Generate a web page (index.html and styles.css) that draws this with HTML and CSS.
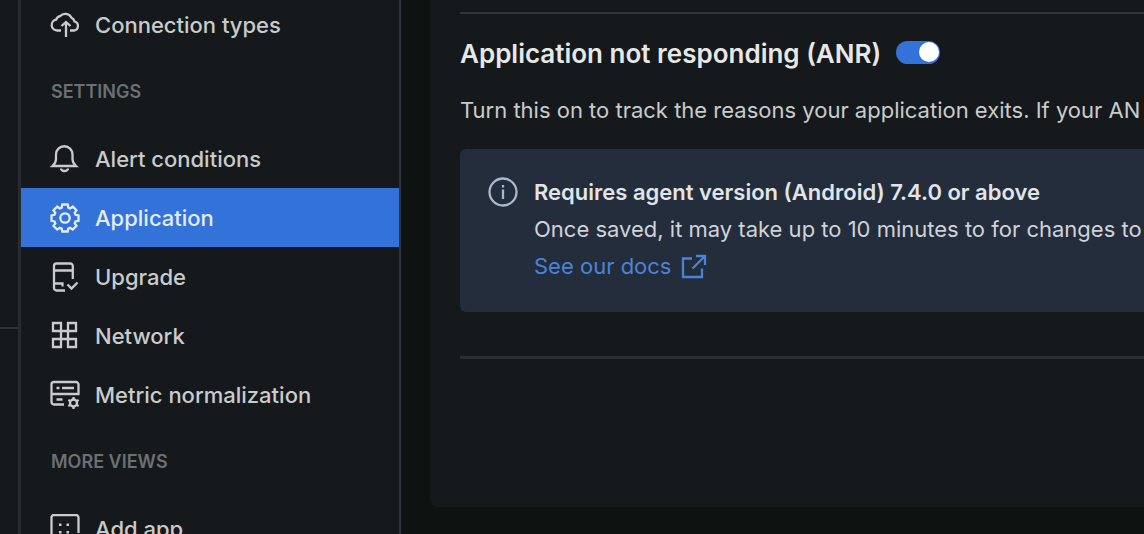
FILE: index.html
```html
<!DOCTYPE html>
<html lang="en">
<head>
<meta charset="utf-8">
<title>Application settings</title>
<link rel="stylesheet" href="styles.css">
</head>
<body>
<div class="app">
  <div class="rail"><div class="rail-section"></div></div>
  <nav class="sidebar" aria-label="Settings">
    <a class="item" href="#connection">
      <svg class="icon" viewBox="0 0 30 30"><path d="M11 20.500H7a5.500 5.500 0 0 1-.8-10.900A5 5 0 0 1 10 6.200a7 7 0 0 1 11.500 1.500A5.500 5.500 0 0 1 24.500 11.500a4.600 4.600 0 0 1-.5 9h-4M16 27V13M11.500 16l4.500-4 4.500 4"/></svg>
      <span>Connection types</span>
    </a>
    <h2 class="group">SETTINGS</h2>
    <a class="item" href="#alerts">
      <svg class="icon" viewBox="0 0 30 30"><path d="M2.500 22c2.300-2 3.500-3.800 3.500-7v-4.500a8.200 8.200 0 0 1 16.500 0V15c0 3.200 1.200 5 3.500 7zM11 24.500a3.500 2.500 0 0 0 7 0"/></svg>
      <span>Alert conditions</span>
    </a>
    <a class="item active" href="#application" aria-current="page">
      <svg class="icon" viewBox="0 0 30 30"><path d="M12.300 1.500h5.400l.6 3.100 1.900.8 2.600-1.800 3.700 3.700-1.800 2.600.8 1.900 3 .6v5.400l-3 .6-.8 1.900 1.800 2.600-3.700 3.700-2.600-1.800-1.900.8-.6 2.900h-5.400l-.6-2.900-1.900-.8-2.600 1.800-3.700-3.700 1.800-2.600-.8-1.900-3-.6v-5.400l3-.6.8-1.900-1.800-2.600 3.700-3.700 2.600 1.800 1.900-.8z"/><circle cx="15" cy="15" r="4.700"/></svg>
      <span>Application</span>
    </a>
    <a class="item" href="#upgrade">
      <svg class="icon" viewBox="0 0 30 30"><path d="M4 8.500h18.500M22.800 17V4a2.500 2.500 0 0 0-2.500-2.500H6.500A2.500 2.500 0 0 0 4 4v22a2.500 2.500 0 0 0 2.500 2.500H15M4 21.500h8.500v3M17.500 22.500l4 4 6-6"/></svg>
      <span>Upgrade</span>
    </a>
    <a class="item" href="#network">
      <svg class="icon" viewBox="0 0 30 30"><path d="M3 2h8v24H3v-8h23v8h-8V2h8v8H3z"/></svg>
      <span>Network</span>
    </a>
    <a class="item" href="#metrics">
      <svg class="icon" viewBox="0 0 30 30"><path d="M14 24.500H4A2.500 2.500 0 0 1 1.500 22V4.500A2.500 2.500 0 0 1 4 2h22a2.500 2.500 0 0 1 2.500 2.500V14H1.500M6.500 8h3M12 8h12M6.500 19.500h6"/><circle cx="23.500" cy="23" r="3.500"/><path d="M23.500 17v2M23.500 27v2M18.300 20l1.900 1M26.800 25l1.900 1M18.300 26l1.900-1M26.800 21l1.900-1"/></svg>
      <span>Metric normalization</span>
    </a>
    <h2 class="group">MORE VIEWS</h2>
    <a class="item" href="#add">
      <svg class="icon" viewBox="0 0 30 30"><path d="M14 27.500H4A2.500 2.500 0 0 1 1.500 25V3A2.500 2.500 0 0 1 4 1h22A2.500 2.500 0 0 1 28.500 3.500V19M21 25h8M25 21v8"/><path class="dots" d="M9 9.500h2.500V12H9zM16.500 9.500H19V12h-2.500zM9 17h2.500v2.500H9zM16.500 17H19v2.500h-2.500z"/></svg>
      <span>Add app</span>
    </a>
  </nav>
  <main class="main">
    <section class="card">
      <hr class="rule">
      <div class="heading">
        <label class="title" for="anr">Application not responding (ANR)</label>
        <input class="toggle" id="anr" type="checkbox" role="switch" checked>
      </div>
      <p class="lead">Turn this on to track the reasons your application exits. If your AN</p>
      <div class="callout">
        <svg class="icon" viewBox="0 0 30 30"><circle cx="15" cy="15" r="13.500"/><path d="M15 12.500V22M15 8v2.500"/></svg>
        <div class="message">
          <strong class="strong">Requires agent version (Android) 7.4.0 or above</strong>
          <p class="note">Once saved, it may take up to 10 minutes to for changes to</p>
          <a class="docs" href="#docs"><span>See our docs</span>
            <svg class="external" viewBox="0 0 26 26"><path d="M11 4.500H2V23h19V14.500M11.500 14.500L23.500 2.500M15 2h9v9"/></svg>
          </a>
        </div>
      </div>
      <hr class="rule rule-end">
    </section>
  </main>
</div>
</body>
</html>
```

FILE: styles.css
```css
* { box-sizing: border-box; }

body {
  margin: 0;
  background: #0e1312;
  color: #c9cbcc;
  font-family: Inter, "Liberation Sans", sans-serif;
  font-size: 22px;
}

.app {
  display: flex;
  height: 100vh;
  overflow: hidden;
}

.rail {
  flex: 0 0 21px;
  background: #15191b;
  border-right: 3px solid #272c30;
}

.rail-section {
  height: 329px;
  border-bottom: 2px solid #2f3437;
}

.sidebar {
  flex: 0 0 380px;
  align-self: flex-start;
  min-height: 100vh;
  margin-top: -5px;
  background: #15191b;
  border-right: 2px solid #2f3538;
}

.item {
  display: flex;
  align-items: center;
  gap: 15px;
  height: 59px;
  padding-left: 29px;
  color: #c9cbcc;
  font-weight: 500;
  text-decoration: none;
  white-space: nowrap;
}

.item.active {
  background: #3372d9;
  color: #e3ecfb;
}

.group {
  margin: 0;
  padding-left: 30px;
  color: #6b7075;
  font-size: 18px;
  font-weight: 600;
  line-height: 75px;
}

.icon {
  flex: none;
  width: 30px;
  height: 30px;
  fill: none;
  stroke: currentColor;
  stroke-width: 2.3;
}

.icon .dots {
  fill: currentColor;
  stroke: none;
}

.main {
  flex: 1;
  min-width: 0;
  padding-left: 29px;
  overflow: hidden;
}

.card {
  padding: 12px 0 148px 30px;
  background: #15191b;
  border-bottom-left-radius: 8px;
  white-space: nowrap;
}

.rule {
  height: 2px;
  margin: 0;
  border: 0;
  background: #2f3538;
}

.rule-end {
  height: 3px;
  margin-top: 44px;
  background: #2a2f32;
}

.heading {
  display: flex;
  align-items: center;
  gap: 15px;
  margin-top: 23px;
}

.title {
  color: #e6e8e8;
  font-size: 26px;
  font-weight: 600;
  line-height: 34px;
}

.toggle {
  display: flex;
  justify-content: flex-end;
  align-items: center;
  width: 44px;
  height: 23px;
  margin: 0 0 4px;
  padding: 0 1px;
  appearance: none;
  background: #3372d9;
  border-radius: 12px;
}

.toggle::before {
  content: "";
  width: 20px;
  height: 20px;
  background: #fff;
  border-radius: 50%;
}

.toggle:not(:checked) {
  justify-content: flex-start;
  background: #4a5054;
}

.lead {
  margin: 23px 0;
  line-height: 32px;
  overflow: hidden;
}

.callout {
  display: flex;
  gap: 16px;
  padding: 25px 0 27px 28px;
  background: #232d3b;
  border-radius: 6px 0 0 6px;
  color: #cfd3d9;
  line-height: 37px;
}

.callout > .icon {
  margin-top: 3px;
  color: #aab8cc;
}

.message {
  min-width: 0;
  overflow: hidden;
}

.strong {
  display: block;
  color: #e1e4e8;
  font-weight: 600;
}

.note {
  margin: 0;
}

.docs {
  display: flex;
  align-items: center;
  gap: 10px;
  color: #4a84d8;
  text-decoration: none;
}

.external {
  width: 26px;
  height: 26px;
  fill: none;
  stroke: currentColor;
  stroke-width: 2.3;
}
```
